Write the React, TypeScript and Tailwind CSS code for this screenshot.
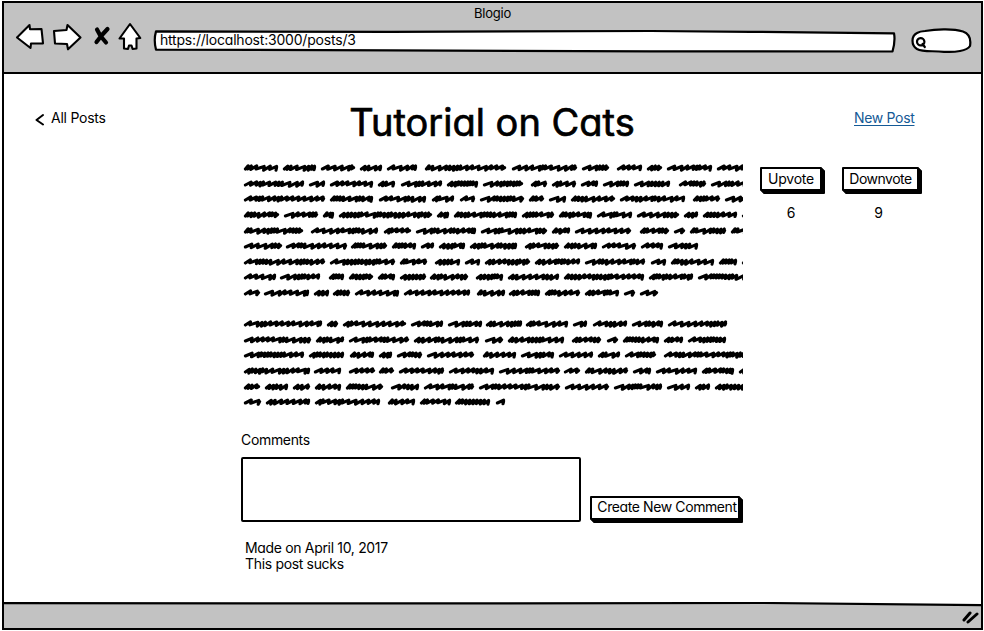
import type { ReactNode } from "react";

type Word = [number, number];
type Line = { y: number; words: Word[] };

/* Each placeholder line holds the start and end of its scribbled words. */
const lines: Line[] = [
  { y: 8, words: [[244,278],[283,316],[321,355],[360,382],[387,417],[425,506],[512,577],[582,609],[617,642],[647,662],[667,712],[717,750]] },
  { y: 24, words: [[244,304],[309,325],[330,373],[378,395],[401,442],[447,478],[483,523],[531,547],[552,576],[581,598],[603,629],[634,670],[679,706],[711,750]] },
  { y: 39, words: [[244,325],[330,373],[379,426],[432,454],[460,475],[480,524],[529,544],[549,566],[571,615],[620,685],[693,720],[725,750]] },
  { y: 55, words: [[244,279],[284,318],[323,334],[339,432],[437,449],[454,517],[522,554],[559,592],[597,632],[637,679],[684,698],[703,737],[742,750]] },
  { y: 71, words: [[244,303],[311,378],[384,411],[416,476],[481,547],[552,570],[575,631],[640,669],[674,685],[690,726],[731,750]] },
  { y: 86, words: [[244,282],[286,347],[351,387],[392,416],[421,434],[439,465],[470,517],[525,559],[564,597],[602,636],[641,663],[668,698]] },
  { y: 102, words: [[244,325],[330,395],[400,427],[435,460],[465,480],[485,530],[535,580],[585,645],[651,666],[671,714],[719,737],[742,750]] },
  { y: 117, words: [[244,276],[280,320],[329,344],[349,373],[378,395],[400,426],[430,468],[476,503],[508,559],[564,644],[649,693],[698,750]] },
  { y: 133, words: [[244,260],[264,309],[314,329],[333,350],[355,399],[404,470],[477,505],[509,540],[545,580],[585,619],[624,635],[640,658]] },
  { y: 164, words: [[244,322],[327,338],[343,406],[411,443],[448,482],[486,522],[526,568],[573,587],[593,627],[632,663],[668,727]] },
  { y: 180, words: [[244,311],[316,344],[349,409],[414,479],[485,503],[508,564],[572,601],[607,618],[623,659],[664,683],[688,726]] },
  { y: 195, words: [[244,304],[309,344],[350,374],[379,392],[397,422],[427,474],[483,516],[521,554],[559,593],[598,620],[625,656],[664,750]] },
  { y: 211, words: [[244,310],[314,341],[349,375],[379,394],[399,444],[449,494],[499,560],[564,580],[585,628],[633,651],[656,697],[702,734],[739,750]] },
  { y: 227, words: [[244,260],[265,288],[293,310],[315,341],[346,383],[391,419],[424,474],[479,560],[565,609],[614,662],[667,690],[695,710],[715,750]] },
  { y: 242, words: [[244,261],[266,310],[315,380],[388,415],[420,451],[455,490],[496,505]] },
];

const noise = (n: number) => {
  const v = Math.sin(n * 12.9898) * 43758.5453;
  return v - Math.floor(v);
};

/* Slanted back-and-forth pen strokes, alternating loose and dense runs. */
function scribble([start, end]: Word, y: number) {
  const last = end - 241 - 1.4;
  let x = start - 241 + 1.4;
  let d = `M${x} ${y + 1}`;
  let i = 0;
  while (x < last - 2) {
    const r = noise(start * 3 + y * 7 + i);
    const run = noise(start + y * 5 + Math.floor(i / 2));
    const step = run > 0.48 ? 5 + r * 2.6 : 2.6 + r * 1.6;
    const nx = Math.min(x + step, last);
    d += `L${nx.toFixed(1)} ${(y - 2.2 + r * 0.6).toFixed(1)}L${Math.max(x + 1, nx - 0.6).toFixed(1)} ${(y + 0.8 + r * 1.5).toFixed(1)}`;
    x = nx;
    i++;
  }
  return d + `L${last} ${y - 0.4}`;
}

function Scribbles() {
  return (
    <svg className="block h-[250px] w-[502px]" viewBox="0 0 502 250" fill="none" stroke="#000" strokeWidth="3.1" strokeLinecap="round" strokeLinejoin="round">
      {lines.map((l) => (
        <path key={l.y} d={l.words.map((w) => scribble(w, l.y)).join("")} />
      ))}
    </svg>
  );
}

function NavIcons() {
  return (
    <svg className="h-[30px] w-[130px]" viewBox="14 22 130 30" fill="#fff" stroke="#000" strokeWidth="2.1" strokeLinejoin="round" strokeLinecap="round">
      <path d="M17 37.5 29.5 25 30 29.2 41.5 29 43 43.4 31 43.5 30.5 48Z" />
      <path d="M54 31 66.5 30 67.5 25 80.5 37.5 68 49.3 67 44 55 43.5Z" />
      <path d="M97 29.5 100.5 36 106 42.5M107.5 29 102 35 96.5 42" strokeWidth="4.2" fill="none" />
      <path d="M130 24 140.3 38 136.5 38.5 136.5 48.5 132.6 49 131.5 45.5 129 45.5 128 49 124 48.5 124 38.5 119.5 38.5Z" />
    </svg>
  );
}

function Button({ children, className }: { children: ReactNode; className: string }) {
  return (
    <button className={`flex items-center justify-center whitespace-nowrap rounded-[1px] border-2 border-black bg-white shadow-[1px_1px_0_#000,2px_2px_0_#000,3px_3px_0_#000] ${className}`}>
      {children}
    </button>
  );
}

export default function App() {
  return (
    <div className="flex h-[631px] w-[984px] overflow-hidden bg-white pl-[2px] pt-px font-['Inter','Liberation_Sans',sans-serif] text-[14px] leading-4 tracking-[-0.33px] text-black [font-feature-settings:'cv11']">
      <div className="flex h-[629px] w-[981px] flex-col border-2 border-black bg-white">
        <header className="flex h-[71px] shrink-0 flex-col border-b-2 border-black bg-[#c2c2c2]">
          <div className="flex h-[19px] items-center justify-center text-[13px] tracking-[-0.2px]">Blogio</div>
          <div className="flex h-[30px] items-center pl-[10px]">
            <NavIcons />
            <div className="relative ml-[7px] flex h-[24px] w-[746px] items-center">
              <svg className="absolute inset-0 h-full w-full overflow-visible" viewBox="0 0 746 24" fill="#fff" stroke="#000" strokeWidth="2.2" strokeLinejoin="round">
                <path d="M5 6.4 L240 6.8 500 6 600 6.8 743 8.3 Q744.5 16 741.5 26.5 L500 26.3 240 25.4 5 24.6 Q2.5 15 5 6.4Z" />
              </svg>
              <span className="relative pl-[9px] pt-[5px] tracking-[-0.2px]">https://localhost:3000/posts/3</span>
            </div>
            <svg className="ml-[12px] mt-[6px] h-[28px] w-[64px]" viewBox="909 26 64 28" fill="#fff" stroke="#000" strokeWidth="2.2" strokeLinecap="round">
              <path d="M925 31C938 28.7 954 29 963 31.5C970 34 971 40 970 46C967 51 955 52.5 944 51.8C933 50.5 923 52.5 917 49C911 45 911 36 917 33Q920 31.3 925 31Z" />
              <path d="M917 42a3.7 3.7 0 1 1 7.4-.5a3.7 3.7 0 0 1-7.4.5M922.6 44l2.2 3" />
            </svg>
          </div>
        </header>

        <main className="flex min-h-0 flex-1">
          <aside className="flex w-[237px] shrink-0 items-start gap-[7px] pl-[31px] pt-[36px]">
            <svg className="mt-[3px] h-[13px] w-[9px]" viewBox="0 0 9 13" fill="none" stroke="#000" strokeWidth="2" strokeLinecap="round" strokeLinejoin="round">
              <path d="M8 2 1.5 7 8 11.5" />
            </svg>
            <a className="tracking-[-0.25px]">All Posts</a>
          </aside>
          <section className="flex w-[502px] shrink-0 flex-col">
            <h1 className="flex h-[86px] items-center justify-center whitespace-nowrap pt-[10px] text-[38px] tracking-[0px] [-webkit-text-stroke:0.7px_#000]">Tutorial on Cats</h1>
            <Scribbles />
            <h2 className="mt-[22px] h-[25px]">Comments</h2>
            <div className="flex h-[65px] items-end">
              <textarea className="h-[65px] w-[340px] resize-none rounded-[2px] border-2 border-black bg-white" />
              <Button className="mb-[2px] ml-[9px] h-[24px] w-[150px] pb-[2px] pl-1 tracking-[-0.4px]">Create New Comment</Button>
            </div>
            <div className="flex flex-col pl-[4px] pt-[18px]">
              <p>Made on April 10, 2017</p>
              <p>This post sucks</p>
            </div>
          </section>
          <aside className="flex flex-1 flex-col pl-[17px]">
            <a className="ml-[94px] mt-[36px] h-[57px] text-[#145a96] underline underline-offset-2">New Post</a>
            <div className="flex gap-[20px]">
              <div className="flex w-[62px] flex-col items-center gap-[14px]">
                <Button className="h-[24px] w-[62px] tracking-[-0.2px]">Upvote</Button>
                <span>6</span>
              </div>
              <div className="flex w-[77px] flex-col items-center gap-[14px]">
                <Button className="h-[24px] w-[77px] tracking-[-0.5px]">Downvote</Button>
                <span className="pr-[4px]">9</span>
              </div>
            </div>
          </aside>
        </main>

        <footer className="relative flex h-[26px] shrink-0 justify-end">
          <svg className="absolute inset-0 h-full w-full" viewBox="0 0 977 26" fill="none">
            <path d="M0 1.2 760 1 977 3.2V26H0Z" fill="#c2c2c2" />
            <path d="M0 1.2 500 1.4 760 1 977 3.2" stroke="#000" strokeWidth="2.2" />
          </svg>
          <svg className="relative mr-[2px] mt-[8px] h-[14px] w-[18px]" viewBox="0 0 18 14" fill="none" stroke="#000" strokeWidth="3" strokeLinecap="round">
            <path d="M3 10 9 3M7 12 16 4" />
          </svg>
        </footer>
      </div>
    </div>
  );
}
